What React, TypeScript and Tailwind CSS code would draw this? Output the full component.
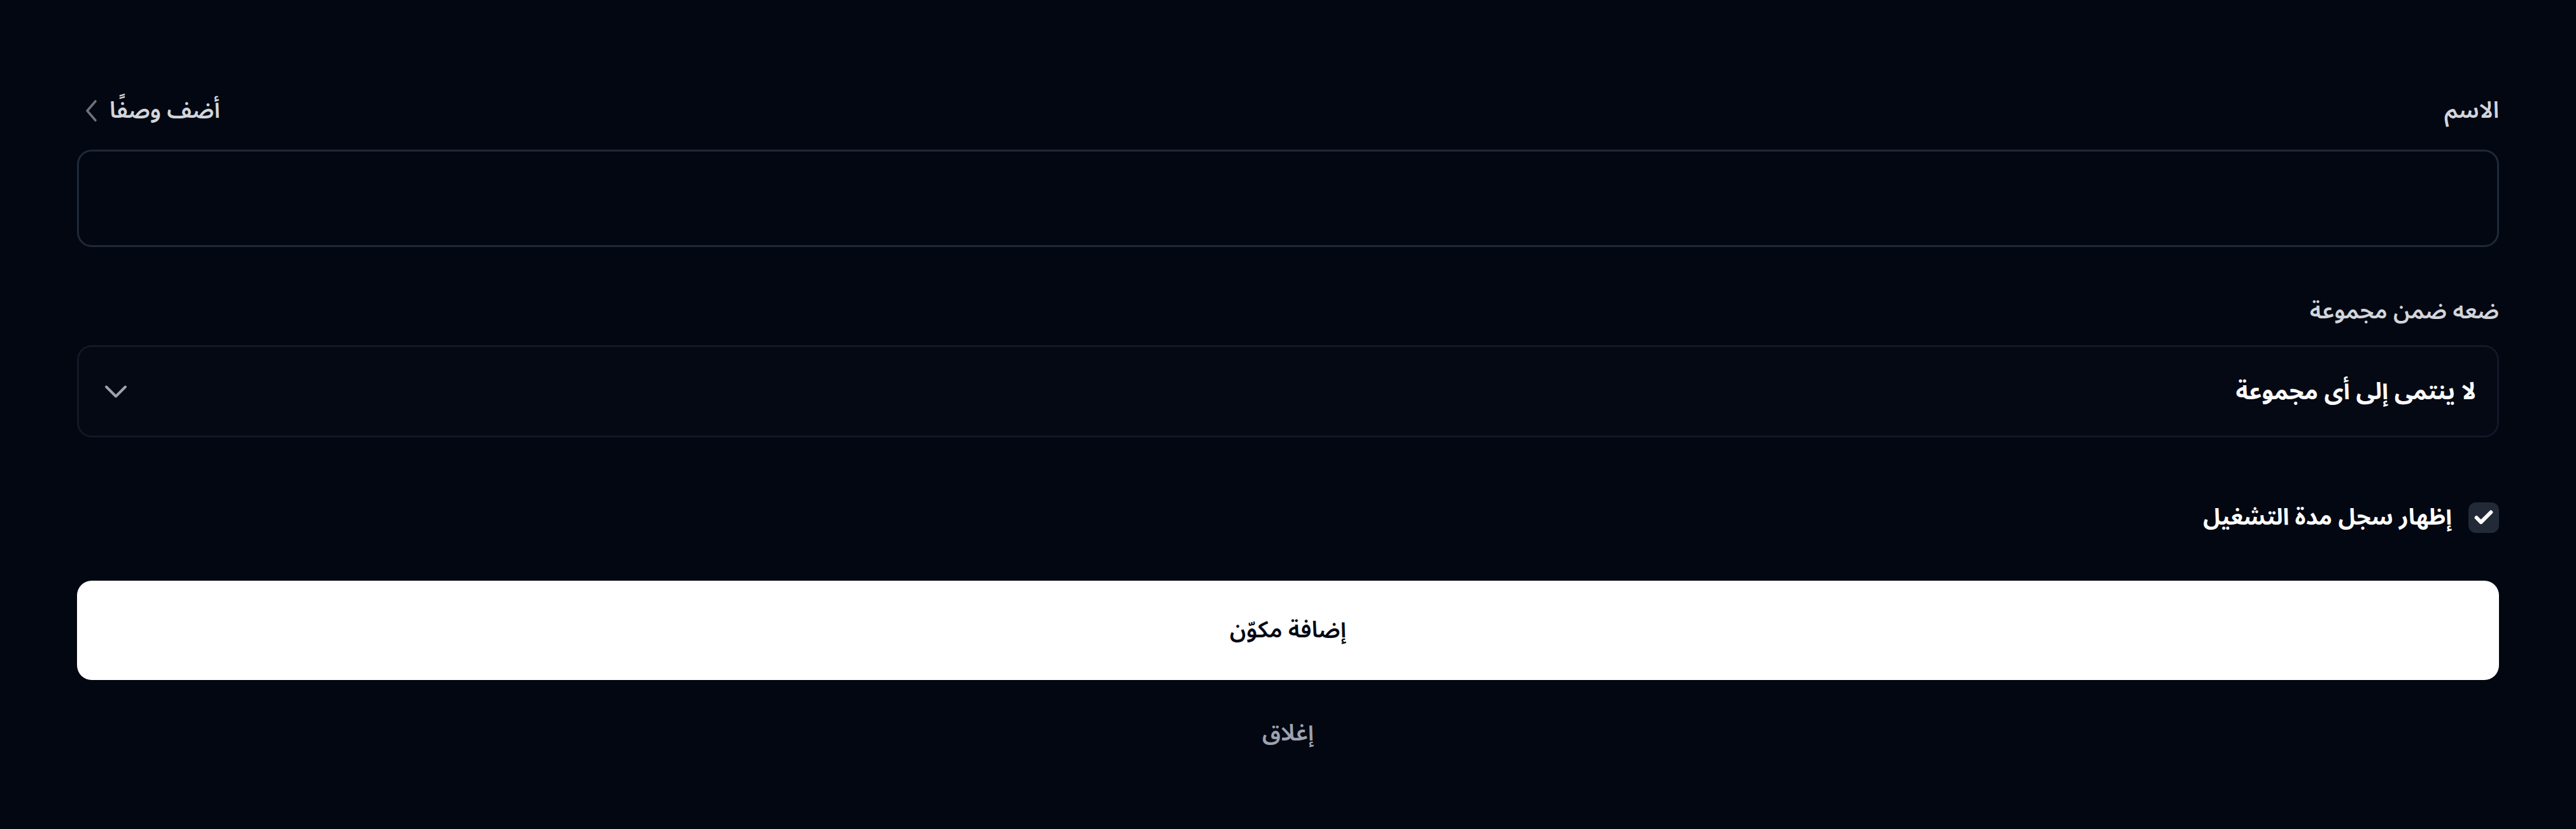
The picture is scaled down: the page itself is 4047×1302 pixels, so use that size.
import React from "react";
import { Check, ChevronDown } from "lucide-react";

export default function App() {
    return (
        <div
            dir="rtl"
            className="min-h-screen bg-[#030712] px-[121px] pt-[147px] pb-[110px] font-['Noto_Sans_Arabic','DejaVu_Sans',sans-serif] text-[36px] leading-[54px]"
        >
            {/* Name row */}
            <div className="flex h-[54px] items-center justify-between">
                <label className="font-semibold text-[#d1d5db]">الاسم</label>
                <button className="flex items-center gap-[19px] font-semibold text-[#d1d5db]">
                    أضف وصفًا
                    <svg width="20" height="36" viewBox="0 0 20 36" fill="none" className="ml-[12px] text-[#6b7280]">
                        <path d="M17 3 4 18l13 15" stroke="currentColor" strokeWidth="3.6" strokeLinecap="round" strokeLinejoin="round" />
                    </svg>
                </button>
            </div>
            <input
                className="mt-[34px] block h-[153px] w-full rounded-[23px] border-[3px] border-[#1f2937] bg-transparent px-[32px] text-[#f9fafb] outline-none"
                value=""
                readOnly
            />

            {/* Group */}
            <div className="mt-[74px] flex h-[54px] items-center">
                <label className="font-semibold text-[#d1d5db]">ضعه ضمن مجموعة</label>
            </div>
            <div className="mt-[26px] flex h-[145px] items-center justify-between rounded-[23px] border-[3px] border-[#111827] bg-[#050913] pr-[33px] pl-[28px]">
                <span className="text-[37px] font-bold text-[#f9fafb]">لا ينتمى إلى أى مجموعة</span>
                <ChevronDown size={60} strokeWidth={1.6} className="text-[#9ca3af]" />
            </div>

            {/* Checkbox */}
            <div className="mt-[99px] flex h-[54px] items-center gap-[26px]">
                <span className="flex h-[48px] w-[48px] items-center justify-center rounded-[12px] bg-[#222a38]">
                    <Check size={34} strokeWidth={4.2} className="text-white" />
                </span>
                <span className="font-bold text-white">إظهار سجل مدة التشغيل</span>
            </div>

            {/* Actions */}
            <button className="mt-[72px] flex h-[156px] w-full items-center justify-center rounded-[23px] bg-white font-semibold text-[#030712]">
                إضافة مكوّن
            </button>
            <div className="mt-[57px] flex h-[54px] items-center justify-center">
                <button className="font-semibold text-[#9ca3af]">إغلاق</button>
            </div>
        </div>
    );
}
